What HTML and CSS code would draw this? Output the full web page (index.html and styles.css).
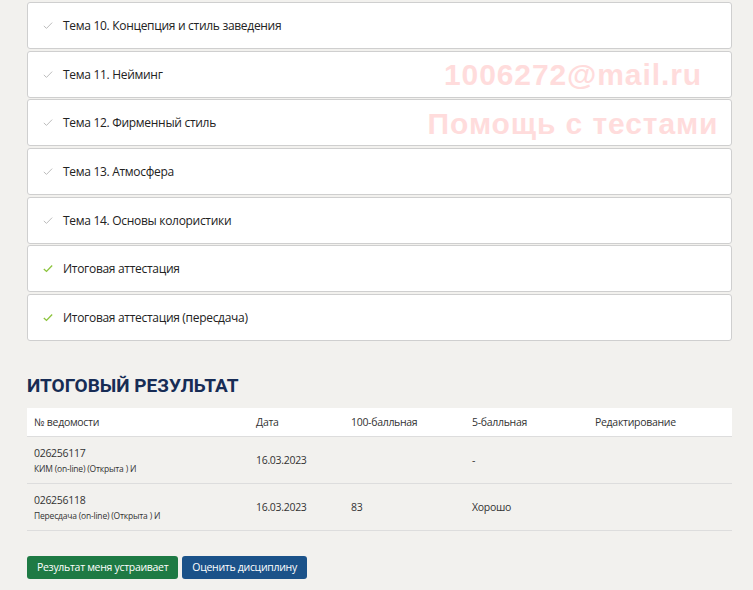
FILE: index.html
```html
<!DOCTYPE html>
<html lang="ru">
<head>
  <meta charset="UTF-8" />
  <title>Итоговый результат</title>
  <link rel="stylesheet" href="styles.css">
</head>
<body>
  <div class="page">
    <div class="topics">
      <div class="topic"><svg class="check" viewBox="0 0 12 10"><path d="M1 5.5 L4.2 8.5 L11 1.5"/></svg>Тема 10. Концепция и стиль заведения</div>
      <div class="topic"><svg class="check" viewBox="0 0 12 10"><path d="M1 5.5 L4.2 8.5 L11 1.5"/></svg>Тема 11. Нейминг</div>
      <div class="topic"><svg class="check" viewBox="0 0 12 10"><path d="M1 5.5 L4.2 8.5 L11 1.5"/></svg>Тема 12. Фирменный стиль</div>
      <div class="topic"><svg class="check" viewBox="0 0 12 10"><path d="M1 5.5 L4.2 8.5 L11 1.5"/></svg>Тема 13. Атмосфера</div>
      <div class="topic"><svg class="check" viewBox="0 0 12 10"><path d="M1 5.5 L4.2 8.5 L11 1.5"/></svg>Тема 14. Основы колористики</div>
      <div class="topic done"><svg class="check" viewBox="0 0 12 10"><path d="M1 5.5 L4.2 8.5 L11 1.5"/></svg>Итоговая аттестация</div>
      <div class="topic done"><svg class="check" viewBox="0 0 12 10"><path d="M1 5.5 L4.2 8.5 L11 1.5"/></svg>Итоговая аттестация (пересдача)</div>

      <!-- водяной знак -->
      <div class="watermark">
        <div>1006272@mail.ru</div>
        <div>Помощь с тестами</div>
      </div>
    </div>

    <h2 class="result-title">Итоговый результат</h2>

    <table class="result-table">
      <thead>
        <tr>
          <th class="c1">№ ведомости</th>
          <th class="c2">Дата</th>
          <th class="c3">100-балльная</th>
          <th class="c4">5-балльная</th>
          <th>Редактирование</th>
        </tr>
      </thead>
      <tbody>
        <tr>
          <td>026256117<div class="sub">КИМ (on-line) (Открыта ) И</div></td>
          <td>16.03.2023</td>
          <td></td>
          <td>-</td>
          <td></td>
        </tr>
        <tr>
          <td>026256118<div class="sub">Пересдача (on-line) (Открыта ) И</div></td>
          <td>16.03.2023</td>
          <td>83</td>
          <td>Хорошо</td>
          <td></td>
        </tr>
      </tbody>
    </table>

    <div class="actions">
      <button class="btn btn-green">Результат меня устраивает</button>
      <button class="btn btn-blue">Оценить дисциплину</button>
    </div>
  </div>
</body>
</html>
```

FILE: styles.css
```css
* {
  box-sizing: border-box;
}
body {
  margin: 0;
  background: #f2f1ee;
  font-family: 'Open Sans', 'Noto Sans', sans-serif;
  color: #222;
}
.page {
  width: 705px;
  margin-left: 27px;
  padding-top: 2px;
}
.topics {
  position: relative;
}
.topic {
  display: flex;
  align-items: center;
  height: 47px;
  margin-bottom: 1.7px;
  padding-left: 15px;
  background: #fff;
  border: 1px solid #cfcfcf;
  border-radius: 3px;
  font-size: 12px;
  letter-spacing: -0.3px;
  color: #222;
}
.check {
  width: 10px;
  height: 9px;
  margin-right: 10px;
  fill: none;
  stroke: #bdbdbd;
  stroke-width: 1.2;
}
.done .check {
  stroke: #8cc43c;
  stroke-width: 1.6;
}
.watermark {
  position: absolute;
  top: 48px;
  left: 400px;
  width: 292px;
  text-align: center;
  font-family: 'Liberation Sans', Arial, sans-serif;
  font-weight: 700;
  font-size: 30px;
  letter-spacing: 0.9px;
  color: #ffdcdc;
  line-height: 49px;
  pointer-events: none;
}
.result-title {
  margin: 33px 0 11px;
  font-family: 'Roboto', 'Open Sans', sans-serif;
  font-size: 19px;
  font-weight: 700;
  text-transform: uppercase;
  color: #172c55;
}
.result-table {
  width: 100%;
  border-collapse: collapse;
  font-size: 10.5px;
  letter-spacing: -0.3px;
  color: #333;
}
.result-table th {
  background: #fff;
  font-weight: 400;
  text-align: left;
  height: 28px;
  padding: 0 7px;
  border-bottom: 1px solid #ddd;
}
.result-table td {
  height: 47px;
  padding: 0 7px;
  border-bottom: 1px solid #ddd;
}
.c1 { width: 222px; }
.c2 { width: 95px; }
.c3 { width: 121px; }
.c4 { width: 123px; }
.sub {
  font-size: 8.5px;
  letter-spacing: -0.2px;
  margin-top: 3px;
}
.actions {
  display: flex;
  gap: 4px;
  margin-top: 25px;
}
.btn {
  height: 23px;
  padding: 0 10px;
  border: none;
  border-radius: 3px;
  color: #fff;
  font-family: 'Open Sans', sans-serif;
  font-size: 10.5px;
  letter-spacing: -0.3px;
  cursor: pointer;
}
.btn-green {
  background: #1e7a44;
}
.btn-blue {
  background: #1b5289;
}
```
